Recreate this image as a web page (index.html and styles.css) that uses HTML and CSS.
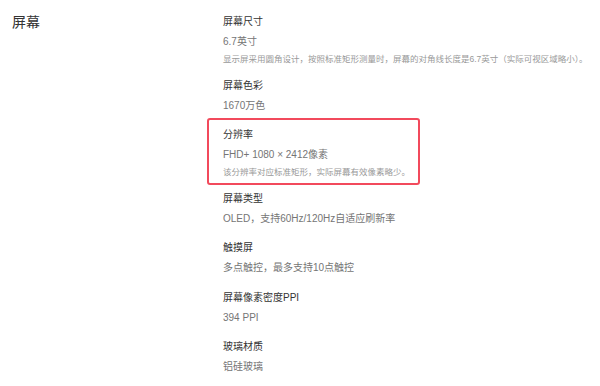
FILE: index.html
```html
<!DOCTYPE html>
<html lang="zh-CN">
<head>
<meta charset="utf-8">
<link rel="stylesheet" href="styles.css">
</head>
<body>
<div class="section">
  <div class="section-title">屏幕</div>
  <div class="specs">
    <div class="item">
      <div class="name">屏幕尺寸</div>
      <div class="value">6.7英寸</div>
      <div class="desc">显示屏采用圆角设计，按照标准矩形测量时，屏幕的对角线长度是6.7英寸（实际可视区域略小）。</div>
    </div>
    <div class="item">
      <div class="name">屏幕色彩</div>
      <div class="value">1670万色</div>
    </div>
    <div class="item highlight">
      <div class="name">分辨率</div>
      <div class="value">FHD+ 1080 × 2412像素</div>
      <div class="desc">该分辨率对应标准矩形，实际屏幕有效像素略少。</div>
    </div>
    <div class="item">
      <div class="name">屏幕类型</div>
      <div class="value">OLED，支持60Hz/120Hz自适应刷新率</div>
    </div>
    <div class="item">
      <div class="name">触摸屏</div>
      <div class="value">多点触控，最多支持10点触控</div>
    </div>
    <div class="item">
      <div class="name">屏幕像素密度PPI</div>
      <div class="value">394 PPI</div>
    </div>
    <div class="item">
      <div class="name">玻璃材质</div>
      <div class="value">铝硅玻璃</div>
    </div>
  </div>
</div>
</body>
</html>
```
FILE: styles.css
```css
html, body {
  margin: 0;
  padding: 0;
  background: #ffffff;
}
body {
  font-family: "Liberation Sans", "Noto Sans CJK SC", sans-serif;
  color: #333333;
}
.section {
  display: flex;
  padding-top: 12px;
}
.section-title {
  flex-shrink: 0;
  width: 211px;
  padding-left: 12px;
  font-size: 14px;
  line-height: 20px;
  color: #333333;
}
.specs {
  display: flex;
  flex-direction: column;
  white-space: nowrap;
}
.item {
  position: relative;
  padding-bottom: 9.5px;
}
.name {
  font-size: 10px;
  line-height: 20px;
  color: #333333;
}
.value {
  font-size: 10px;
  line-height: 20px;
  color: #757575;
}
.desc {
  font-size: 8.5px;
  line-height: 14px;
  color: #999999;
}
.highlight::after {
  content: "";
  position: absolute;
  left: -16px;
  top: -7px;
  width: 213px;
  height: 67px;
  box-sizing: border-box;
  border: 2px solid #f24a5c;
  border-radius: 3px;
}
```
